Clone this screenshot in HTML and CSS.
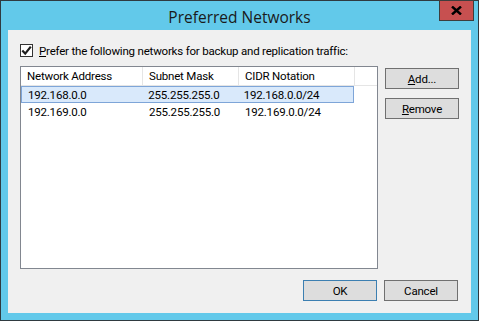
FILE: index.html
```html
<!DOCTYPE html>
<html lang="en">
<head>
    <meta charset="UTF-8">
    <meta name="viewport" content="width=device-width, initial-scale=1.0">
    <title>Preferred Networks</title>
    <link rel="stylesheet" href="styles.css">
</head>
<body>
    <div class="window">
        <div class="titlebar">
            <span class="title">Preferred Networks</span>
            <div class="close">
                <svg width="11" height="9" viewBox="0 0 11 9">
                    <path d="M1 0.5 L10 8.5 M10 0.5 L1 8.5" stroke="#000" stroke-width="2.4" fill="none"/>
                </svg>
            </div>
        </div>
        <div class="client">
            <label class="check-row">
                <span class="checkbox">
                    <svg width="11" height="11" viewBox="0 0 11 11">
                        <path d="M1.3 5.6 L4.2 8.6 L9.8 1.6" stroke="#1e1e1e" stroke-width="2.2" fill="none"/>
                    </svg>
                </span>
                <span><u>P</u>refer the following networks for backup and replication traffic:</span>
            </label>

            <div class="main">
                <div class="list">
                    <div class="list-head">
                        <div class="col c1">Network Address</div>
                        <div class="col c2">Subnet Mask</div>
                        <div class="col c3">CIDR Notation</div>
                    </div>
                    <div class="row selected">
                        <div class="col c1">192.168.0.0</div>
                        <div class="col c2">255.255.255.0</div>
                        <div class="col c3">192.168.0.0/24</div>
                    </div>
                    <div class="row">
                        <div class="col c1">192.169.0.0</div>
                        <div class="col c2">255.255.255.0</div>
                        <div class="col c3">192.169.0.0/24</div>
                    </div>
                </div>
                <div class="side-buttons">
                    <button class="btn"><u>A</u>dd...</button>
                    <button class="btn"><u>R</u>emove</button>
                </div>
            </div>

            <div class="footer">
                <button class="btn default">OK</button>
                <button class="btn">Cancel</button>
            </div>
        </div>
    </div>
</body>
</html>
```

FILE: styles.css
```css
body {
    margin: 0;
    font-family: Roboto, "Open Sans", sans-serif;
    font-size: 11.5px;
    letter-spacing: -0.2px;
    color: #000;
}
.window {
    width: 479px;
    height: 321px;
    box-sizing: border-box;
    border: 1px solid #2f3a40;
    background: #62c9ea;
    display: flex;
    flex-direction: column;
}
.titlebar {
    position: relative;
    height: 29px;
    display: flex;
    justify-content: center;
    align-items: center;
}
.title {
    font-family: "Open Sans", sans-serif;
    font-size: 15.5px;
    letter-spacing: 0;
    color: #1a1a1a;
    padding-top: 2px;
}
.close {
    position: absolute;
    top: -1px;
    right: 4px;
    width: 35px;
    height: 21px;
    box-sizing: border-box;
    border: 1px solid #3d3d3d;
    background: #c75050;
    display: flex;
    justify-content: center;
    align-items: center;
}
.client {
    margin: 0 7px;
    height: 283px;
    box-sizing: border-box;
    background: #f0f0f0;
    padding: 14px 12px 0 12px;
}
.check-row {
    display: flex;
    align-items: center;
    gap: 6px;
    height: 13px;
}
.checkbox {
    width: 13px;
    height: 13px;
    box-sizing: border-box;
    border: 1px solid #333;
    background: #fff;
    display: flex;
    justify-content: center;
    align-items: center;
}
.main {
    display: flex;
    gap: 7px;
    margin-top: 9px;
}
.list {
    width: 358px;
    height: 203px;
    box-sizing: border-box;
    border: 1px solid #828790;
    background: #fff;
}
.list-head {
    display: flex;
    height: 18px;
    border-bottom: 1px solid #e5e5e5;
}
.list-head .col {
    border-right: 1px solid #e5e5e5;
    line-height: 18px;
}
.row {
    display: flex;
    height: 17px;
    box-sizing: border-box;
    border: 1px solid transparent;
}
.row.selected {
    width: 333px;
    background: #d9e9fb;
    border-color: #7ea5d8;
}
.col {
    box-sizing: border-box;
    padding-left: 6px;
    line-height: 16px;
    white-space: nowrap;
}
.c1 { width: 122px; }
.c2 { width: 96px; }
.c3 { width: 116px; }
.row .c1 { width: 121px; }
.side-buttons {
    display: flex;
    flex-direction: column;
    gap: 9px;
    margin-top: 2px;
}
.btn {
    width: 74px;
    height: 21px;
    box-sizing: border-box;
    border: 1px solid #707070;
    background: #dddddd;
    font-family: inherit;
    font-size: 11.5px;
    letter-spacing: -0.2px;
    color: #000;
    padding: 0;
}
.btn.default {
    border-color: #3c7fb1;
}
.footer {
    display: flex;
    justify-content: flex-end;
    gap: 7px;
    margin-top: 11px;
    padding-right: 1px;
}
```
